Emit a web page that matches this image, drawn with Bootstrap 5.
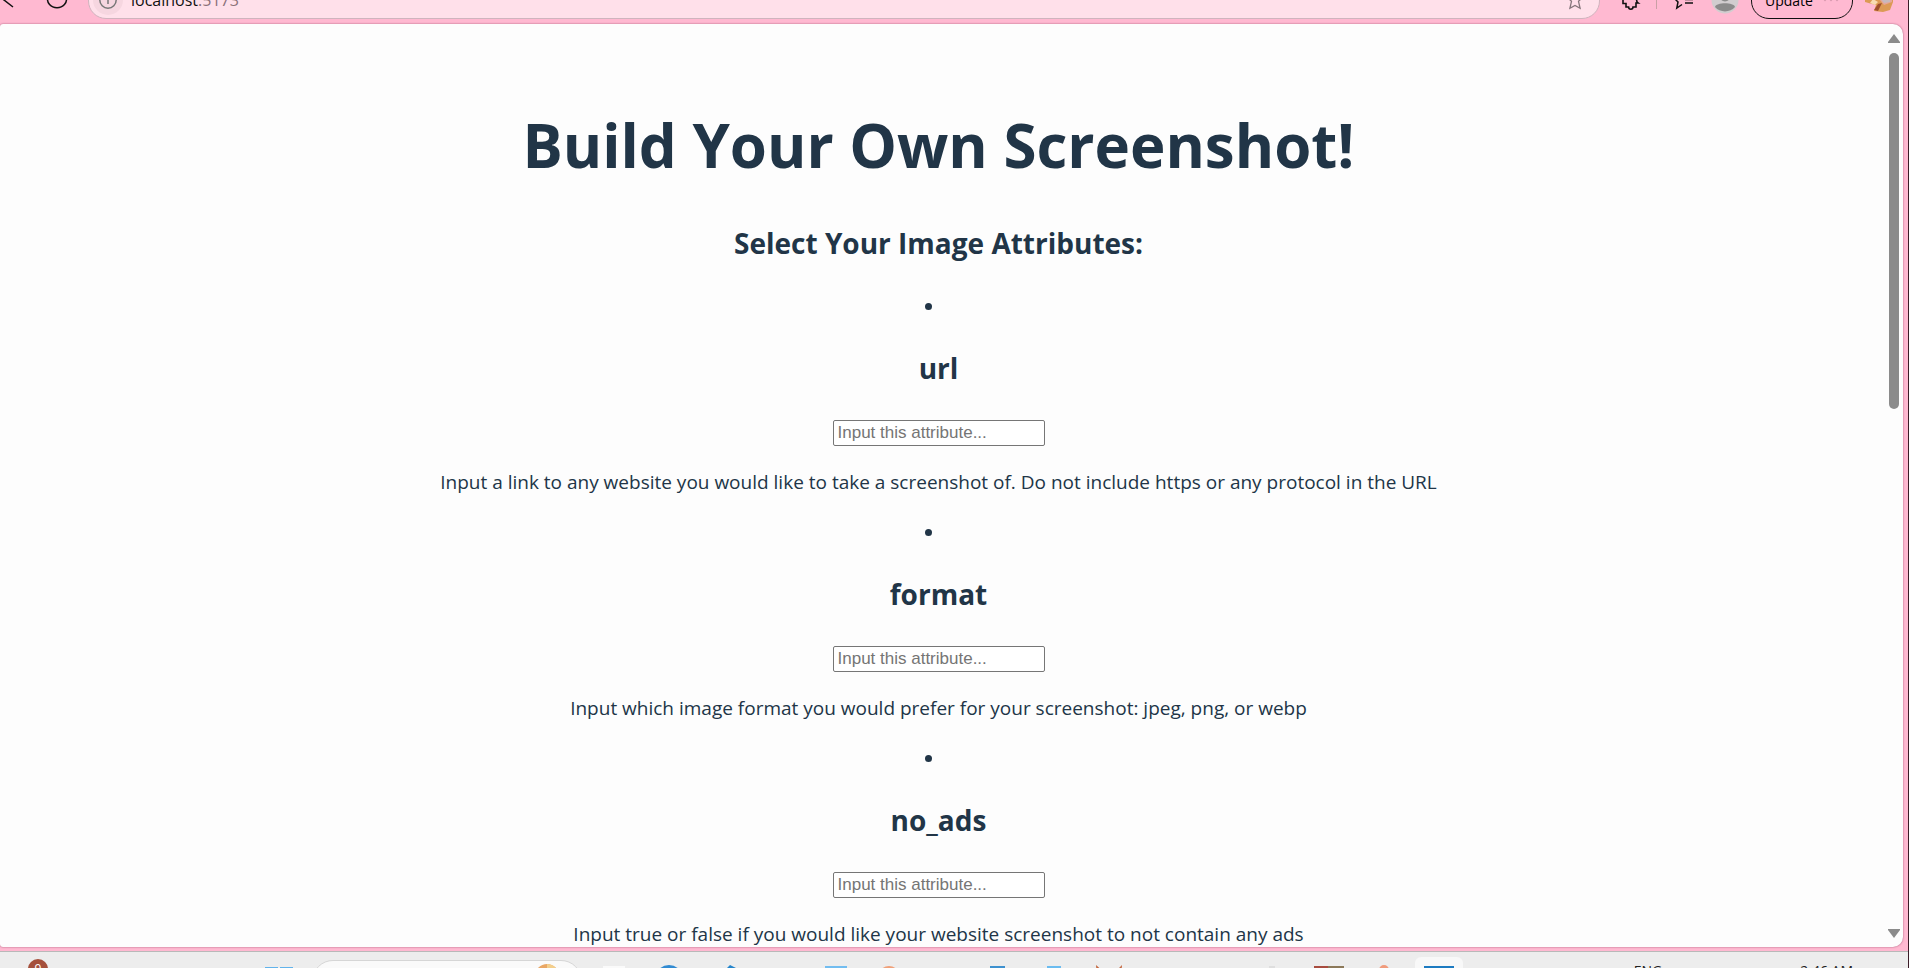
<!DOCTYPE html>
<html lang="en">
<head>
<meta charset="utf-8">
<meta name="viewport" content="width=device-width, initial-scale=1">
<title>Build Your Own Screenshot!</title>
<link href="https://cdn.jsdelivr.net/npm/bootstrap@5.3.0/dist/css/bootstrap.min.css" rel="stylesheet">
<style>
  body { font-family: "Open Sans", "Noto Sans", sans-serif; background: #ffb9d1; color: #213547; }
  .window { border-right: 1px solid #3b1c28; }
  /* the window's bars are cut off by the screen edge, so each shows part of its row */
  .toolbar { height: 24px; }
  .toolbar-row { height: 48px; font-size: 16px; color: #111; }
  .toolbar svg, .taskbar svg { display: block; }
  .tool { width: 30px; height: 30px; border: 0; padding: 0; background: none; color: inherit; display: flex; align-items: center; justify-content: center; }
  .tools { gap: 12px; margin-right: 15px; }
  .address { height: 37px; background: #ffe0ea; border: 1px solid #d0b4be; border-radius: 18px; margin: 0 16px; padding: 0 15px 0 4px; }
  .site-info { background: #f6d6e0; border-radius: 50%; color: #777; }
  .address-text { color: #8a7078; font-size: 16px; }
  .address-text b { color: #111; font-weight: 400; }
  .rule { width: 1px; height: 18px; background: #c9a0a5; margin-left: -2px; }
  .update { height: 37px; width: 102px; border: 1px solid #111; border-radius: 18px; background: none; font-size: 14px; padding: 0 13px; }
  .pane { background: #fdfdfd; border-radius: 3px 10px 10px 3px; margin-right: 5px; box-shadow: 0 0 2px #a0506f; min-height: 0; }
  .content { padding-right: 8px; }
  .page-title { font-size: 60px; font-weight: 700; line-height: 70px; margin: 86px 0 46px; }
  .group-title { font-size: 28px; font-weight: 700; line-height: 34px; margin: 0; }
  .attrs { list-style-position: inside; font-size: 19px; line-height: 30px; margin: 31px 0 0; padding: 0; }
  .attrs .group-title { margin: 30px 0 35px; }
  .attrs p { margin: 0 0 20px; }
  .attr-input { display: block; width: 212px; height: 26px; margin: 0 auto 21px; padding: 1px 4px; border: 1px solid #767676; border-radius: 2px; background: #fff; font: 17px/20px "Liberation Sans", sans-serif; }
  .attr-input::placeholder { color: #757575; opacity: 1; }
  .scroll { width: 18px; padding: 10px 0 9px; }
  .thumb { width: 10px; height: 356px; border-radius: 5px; background: #8b8b8b; margin-top: 10px; }
  .taskbar { height: 17px; background: #ededed; border-top: 1px solid #b9b9b9; margin-top: 4px; }
  .taskbar-row { height: 60px; font-size: 14px; color: #222; }
  .tile { width: 55px; height: 50px; padding: 0; border: 0; background: none; display: flex; justify-content: center; }
  .tile svg { margin-top: 8px; }
  .tile-open { width: 48px; margin: 0 3px 0 4px; background: #f8f8f8; border-radius: 6px; }
  .search { width: 270px; height: 42px; border: 1px solid #d6d6d6; border-radius: 21px; background: #fafafa; padding-right: 22px; }
  .note { width: 20px; height: 20px; border-radius: 50%; background: #a5503c; color: #fff; font-size: 12px; line-height: 20px; margin: 7px 0 0 28px; }
</style>
</head>
<body>
<div class="window vh-100 d-flex flex-column overflow-hidden">
  <header class="toolbar d-flex align-items-end overflow-hidden flex-shrink-0">
    <div class="toolbar-row d-flex align-items-center w-100">
      <button class="tool me-3" style="margin-left:-8px" aria-label="Back"><svg width="24" height="24" fill="none" stroke="currentColor" stroke-width="1.5"><path d="M18 19 9 12l9-7"/></svg></button>
      <button class="tool ms-1" aria-label="Reload"><svg width="24" height="24" fill="none" stroke="currentColor" stroke-width="1.5"><path d="M8 3.500A9.500 8.500 0 1 0 16 3.500"/></svg></button>
      <div class="address flex-grow-1 d-flex align-items-center">
        <button class="tool site-info me-2" aria-label="Site information"><svg width="20" height="20" fill="none" stroke="currentColor" stroke-width="1.500"><circle cx="10" cy="10" r="8.200"/><path d="M10 9v5M10 5.500v1.500"/></svg></button>
        <span class="address-text flex-grow-1"><b>localhost</b>:5173</span>
        <svg width="18" height="20" viewBox="0 0 18 20" fill="none" stroke="#85757b" stroke-width="1.300"><path d="m9 2 2.200 5 5.300.6-4 3.700 1.600 7L9 15.500 3.900 18.300l1.600-7-4-3.700L6.800 7Z"/></svg>
      </div>
      <div class="tools d-flex align-items-center">
        <button class="tool" aria-label="Extensions"><svg width="20" height="20" fill="none" stroke="currentColor" stroke-width="1.600"><path d="M2 4h5a3 3 0 0 1 6 0h4v4a3 3 0 0 0 0 5h-2v4h-3a2.200 2.200 0 0 1-4.400 0H5v-3.500H2Z"/></svg></button>
        <div class="rule"></div>
        <button class="tool" aria-label="Favorites"><svg width="22" height="20" viewBox="0 0 22 20" fill="none" stroke="currentColor" stroke-width="1.500"><path d="m8 1-2 6-5 1 4 4-1.200 6L9 14.500M12 9.500h8M12 13h8"/></svg></button>
        <svg width="28" height="28" viewBox="0 0 28 28"><circle cx="14" cy="14" r="13.500" fill="#d1cdcf"/><circle cx="14" cy="10" r="5.500" fill="#8b8b8b"/><path d="M4 21c1-5 19-5 20 0a13.500 13.500 0 0 1-20 0" fill="#8b8b8b"/></svg>
        <button class="update d-flex align-items-center justify-content-between"><span>Update</span><svg width="16" height="4" fill="#dd9db3"><circle cx="2" cy="2" r="1.200"/><circle cx="8" cy="2" r="1.200"/><circle cx="14" cy="2" r="1.200"/></svg></button>
        <svg width="28" height="28" viewBox="0 0 28 28"><path d="M0 4h28v12l-3 8-7 2-9-1 2-6-4-1-7-2Z" fill="#dc9a55"/><path d="M15 4h12v12l-8 3-4-5Z" fill="#e6a69a"/><path d="m8 13 5 3-3 3-5-2Z" fill="#f7dcb2"/><path d="m17 17-4 8-4-1 4-6Z" fill="#a04e2c"/><path d="M15 12h10v4l-6 1Z" fill="#c7b9be"/></svg>
      </div>
    </div>
  </header>

  <div class="pane flex-grow-1 d-flex overflow-hidden">
    <main class="content flex-grow-1 text-center overflow-hidden">
      <h1 class="page-title">Build Your Own Screenshot!</h1>
      <h2 class="group-title">Select Your Image Attributes:</h2>
      <ul class="attrs">
        <li>
          <h2 class="group-title"><label for="url">url</label></h2>
          <input class="attr-input" id="url" type="text" placeholder="Input this attribute...">
          <p>Input a link to any website you would like to take a screenshot of. Do not include https or any protocol in the URL</p>
        </li>
        <li>
          <h2 class="group-title"><label for="format">format</label></h2>
          <input class="attr-input" id="format" type="text" placeholder="Input this attribute...">
          <p>Input which image format you would prefer for your screenshot: jpeg, png, or webp</p>
        </li>
        <li>
          <h2 class="group-title"><label for="no_ads">no_ads</label></h2>
          <input class="attr-input" id="no_ads" type="text" placeholder="Input this attribute...">
          <p>Input true or false if you would like your website screenshot to not contain any ads</p>
        </li>
      </ul>
    </main>
    <div class="scroll d-flex flex-column align-items-center flex-shrink-0">
      <svg class="flex-shrink-0" width="12" height="9" fill="#8b8b8b"><path d="M6 0 12 8v1H0V8Z"/></svg>
      <div class="thumb"></div>
      <svg class="mt-auto flex-shrink-0" width="12" height="9" fill="#8b8b8b"><path d="M6 9 12 1V0H0v1Z"/></svg>
    </div>
  </div>

  <footer class="taskbar overflow-hidden flex-shrink-0">
    <div class="taskbar-row d-flex align-items-start">
      <div class="note text-center flex-shrink-0">9</div>
      <button class="tile" style="margin:6px 6px 0 203px" aria-label="Start"><svg width="28" height="28" fill="#62b3eb"><path d="M0 1h13v13H0ZM15 1h13v13H15Z"/></svg></button>
      <div class="search d-flex justify-content-end flex-shrink-0 mt-2"><svg width="24" height="24" style="margin-top:3px"><circle cx="12" cy="12" r="12" fill="#e9a765"/><path d="M12 0a12 12 0 0 1 12 12H12Z" fill="#f3cf8c"/></svg></div>
      <div class="d-flex ms-1 flex-grow-1" style="margin-top:5px">
        <button class="tile" aria-label="Task view"><svg width="28" height="28"><path d="M3 1h22v20H3Z" fill="#fafafa"/></svg></button>
        <button class="tile" aria-label="Edge"><svg width="28" height="28"><circle cx="14" cy="14" r="14" fill="#318bd2"/></svg></button>
        <button class="tile" aria-label="Code"><svg width="28" height="28"><path d="m20 0 6 3v20l-6 3L8 12Z" fill="#2585cb"/></svg></button>
        <span class="tile"></span>
        <button class="tile" aria-label="Mail"><svg width="28" height="28"><path d="M5 1h22v20H5Z" fill="#72bdf0"/></svg></button>
        <button class="tile" aria-label="Paint"><svg width="28" height="28"><circle cx="14" cy="12" r="11" fill="#f0a078"/></svg></button>
        <span class="tile"></span>
        <button class="tile" aria-label="Outlook"><svg width="28" height="28"><path d="M5 1h15v20H5Z" fill="#3e91cf"/></svg></button>
        <button class="tile" aria-label="Notepad"><svg width="28" height="28"><path d="M7 1h14v20H7Z" fill="#6bbcf0"/></svg></button>
        <button class="tile" aria-label="Fox"><svg width="28" height="28"><path d="m1 0 10 9 8-1 8-8-2 24H3Z" fill="#c4673f"/></svg></button>
        <span class="tile"></span><span class="tile"></span>
        <button class="tile" aria-label="Files"><svg width="28" height="28"><path d="M9 1h6v18H9Z" fill="#dedede"/></svg></button>
        <button class="tile" aria-label="Game"><svg width="30" height="28"><path d="M0 1h14v20H0Z" fill="#a84c3f"/><path d="M14 1h16v20H14Z" fill="#8c7959"/></svg></button>
        <button class="tile" aria-label="Git"><svg width="28" height="28"><circle cx="14" cy="5" r="5" fill="#f09b7c"/></svg></button>
        <button class="tile tile-open" aria-label="Monitor"><svg width="30" height="28"><path d="M0 1h30v20H0Z" fill="#1d7bc1"/></svg></button>
      </div>
      <div class="d-flex mt-2" style="margin-right:55px"><span style="margin-right:138px">ENG</span><span>2:46 AM</span></div>
    </div>
  </footer>
</div>
<script src="https://cdn.jsdelivr.net/npm/bootstrap@5.3.0/dist/js/bootstrap.bundle.min.js"></script>
</body>
</html>
